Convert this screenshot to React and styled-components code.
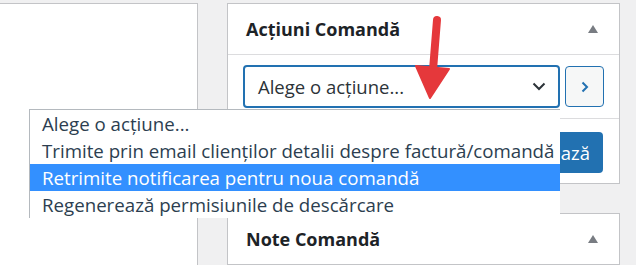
import styled, { createGlobalStyle, css } from "styled-components"

const Global = createGlobalStyle`
    html, body {
        margin: 0;
        background: #f0f0f1;
        font-family: "Open Sans", "Noto Sans", sans-serif;
        overflow: hidden;
    }
`

const Page = styled.div`
    position: relative;
    display: flex;
    align-items: flex-start;
    gap: 29px;
    padding-top: 3px;
    width: 636px;
    height: 265px;
    box-sizing: border-box;
`

const LeftPanel = styled.div`
    width: 198px;
    height: 262px;
    box-sizing: border-box;
    background: #fff;
    border-top: 1px solid #c3c4c7;
    border-right: 1px solid #c3c4c7;
`

const Sidebar = styled.div`
    width: 393px;
    display: flex;
    flex-direction: column;
    gap: 29px;
`

const Box = styled.div`
    background: #fff;
    border: 1px solid #c3c4c7;
    box-sizing: border-box;
`

const BoxHeader = styled.div`
    height: 50px;
    display: flex;
    align-items: center;
    justify-content: space-between;
    padding: 0 18px 0 18px;
    ${props => props.divided && css`
        border-bottom: 1px solid #dcdcde;
    `}
`

const Heading = styled.h2`
    margin: 0;
    font-size: 18px;
    font-weight: 700;
    color: #1d2327;
`

const Toggle = styled.span`
    width: 0;
    height: 0;
    margin-right: 3px;
    border-left: 5px solid transparent;
    border-right: 5px solid transparent;
    border-bottom: 8px solid #787c82;
`

const ActionRow = styled.div`
    display: flex;
    align-items: center;
    gap: 5px;
    padding: 10px 15px 0 15px;
`

const Select = styled.div`
    width: 317px;
    height: 43px;
    box-sizing: border-box;
    border: 2px solid #2271b1;
    border-radius: 4px;
    display: flex;
    align-items: center;
    justify-content: space-between;
    padding: 0 12px 0 13px;
    font-size: 18.5px;
    color: #2c3338;
`

const GoButton = styled.div`
    width: 39px;
    height: 41px;
    box-sizing: border-box;
    border: 1px solid #2271b1;
    border-radius: 4px;
    background: #f6f7f7;
    display: flex;
    align-items: center;
    justify-content: center;
`

const Footer = styled.div`
    margin-top: 10px;
    border-top: 1px solid #dcdcde;
    padding: 13px 16px 10px;
    display: flex;
    justify-content: flex-end;
`

const PrimaryButton = styled.div`
    height: 41px;
    display: flex;
    align-items: center;
    padding: 0 13px;
    border-radius: 4px;
    background: #2271b1;
    color: #fff;
    font-size: 18.5px;
`

const Dropdown = styled.ul`
    position: absolute;
    left: 29px;
    top: 109px;
    width: 530px;
    margin: 0;
    padding: 0;
    list-style: none;
    background: #fff;
    border-left: 1px solid #b4b9be;
    border-top: 1px solid #b4b9be;
`

const Option = styled.li`
    height: 27px;
    line-height: 27px;
    padding-left: 12px;
    font-size: 18.7px;
    color: #2c3e50;
    white-space: nowrap;
    ${props => props.active && css`
        background: #3390ff;
        color: #fff;
    `}
`

const Arrow = styled.svg`
    position: absolute;
    left: 0;
    top: 0;
    pointer-events: none;
`

function App() {
    return (
        <Page>
            <Global />
            <LeftPanel />
            <Sidebar>
                <Box>
                    <BoxHeader divided>
                        <Heading>Acțiuni Comandă</Heading>
                        <Toggle />
                    </BoxHeader>
                    <ActionRow>
                        <Select>
                            <span>Alege o acțiune...</span>
                            <svg width="14" height="9" viewBox="0 0 14 9">
                                <path d="M1.5 1.5 L7 7 L12.5 1.5" fill="none" stroke="#2c3338" strokeWidth="2" />
                            </svg>
                        </Select>
                        <GoButton>
                            <svg width="8" height="12" viewBox="0 0 8 12">
                                <path d="M1.5 1.5 L6 6 L1.5 10.5" fill="none" stroke="#2271b1" strokeWidth="2" />
                            </svg>
                        </GoButton>
                    </ActionRow>
                    <Footer>
                        <PrimaryButton>Actualizează</PrimaryButton>
                    </Footer>
                </Box>
                <Box>
                    <BoxHeader>
                        <Heading>Note Comandă</Heading>
                        <Toggle />
                    </BoxHeader>
                </Box>
            </Sidebar>
            <Dropdown>
                <Option>Alege o acțiune...</Option>
                <Option>Trimite prin email clienților detalii despre factură/comandă</Option>
                <Option active>Retrimite notificarea pentru noua comandă</Option>
                <Option>Regenerează permisiunile de descărcare</Option>
            </Dropdown>
            <Arrow width="636" height="265" viewBox="0 0 636 265">
                <line x1="437" y1="20" x2="433" y2="70" stroke="#e5383b" strokeWidth="8" strokeLinecap="round" />
                <polygon points="416,66 449,69 430,98" fill="#e5383b" stroke="#e5383b" strokeWidth="2" strokeLinejoin="round" />
            </Arrow>
        </Page>
    )
}

export default App
